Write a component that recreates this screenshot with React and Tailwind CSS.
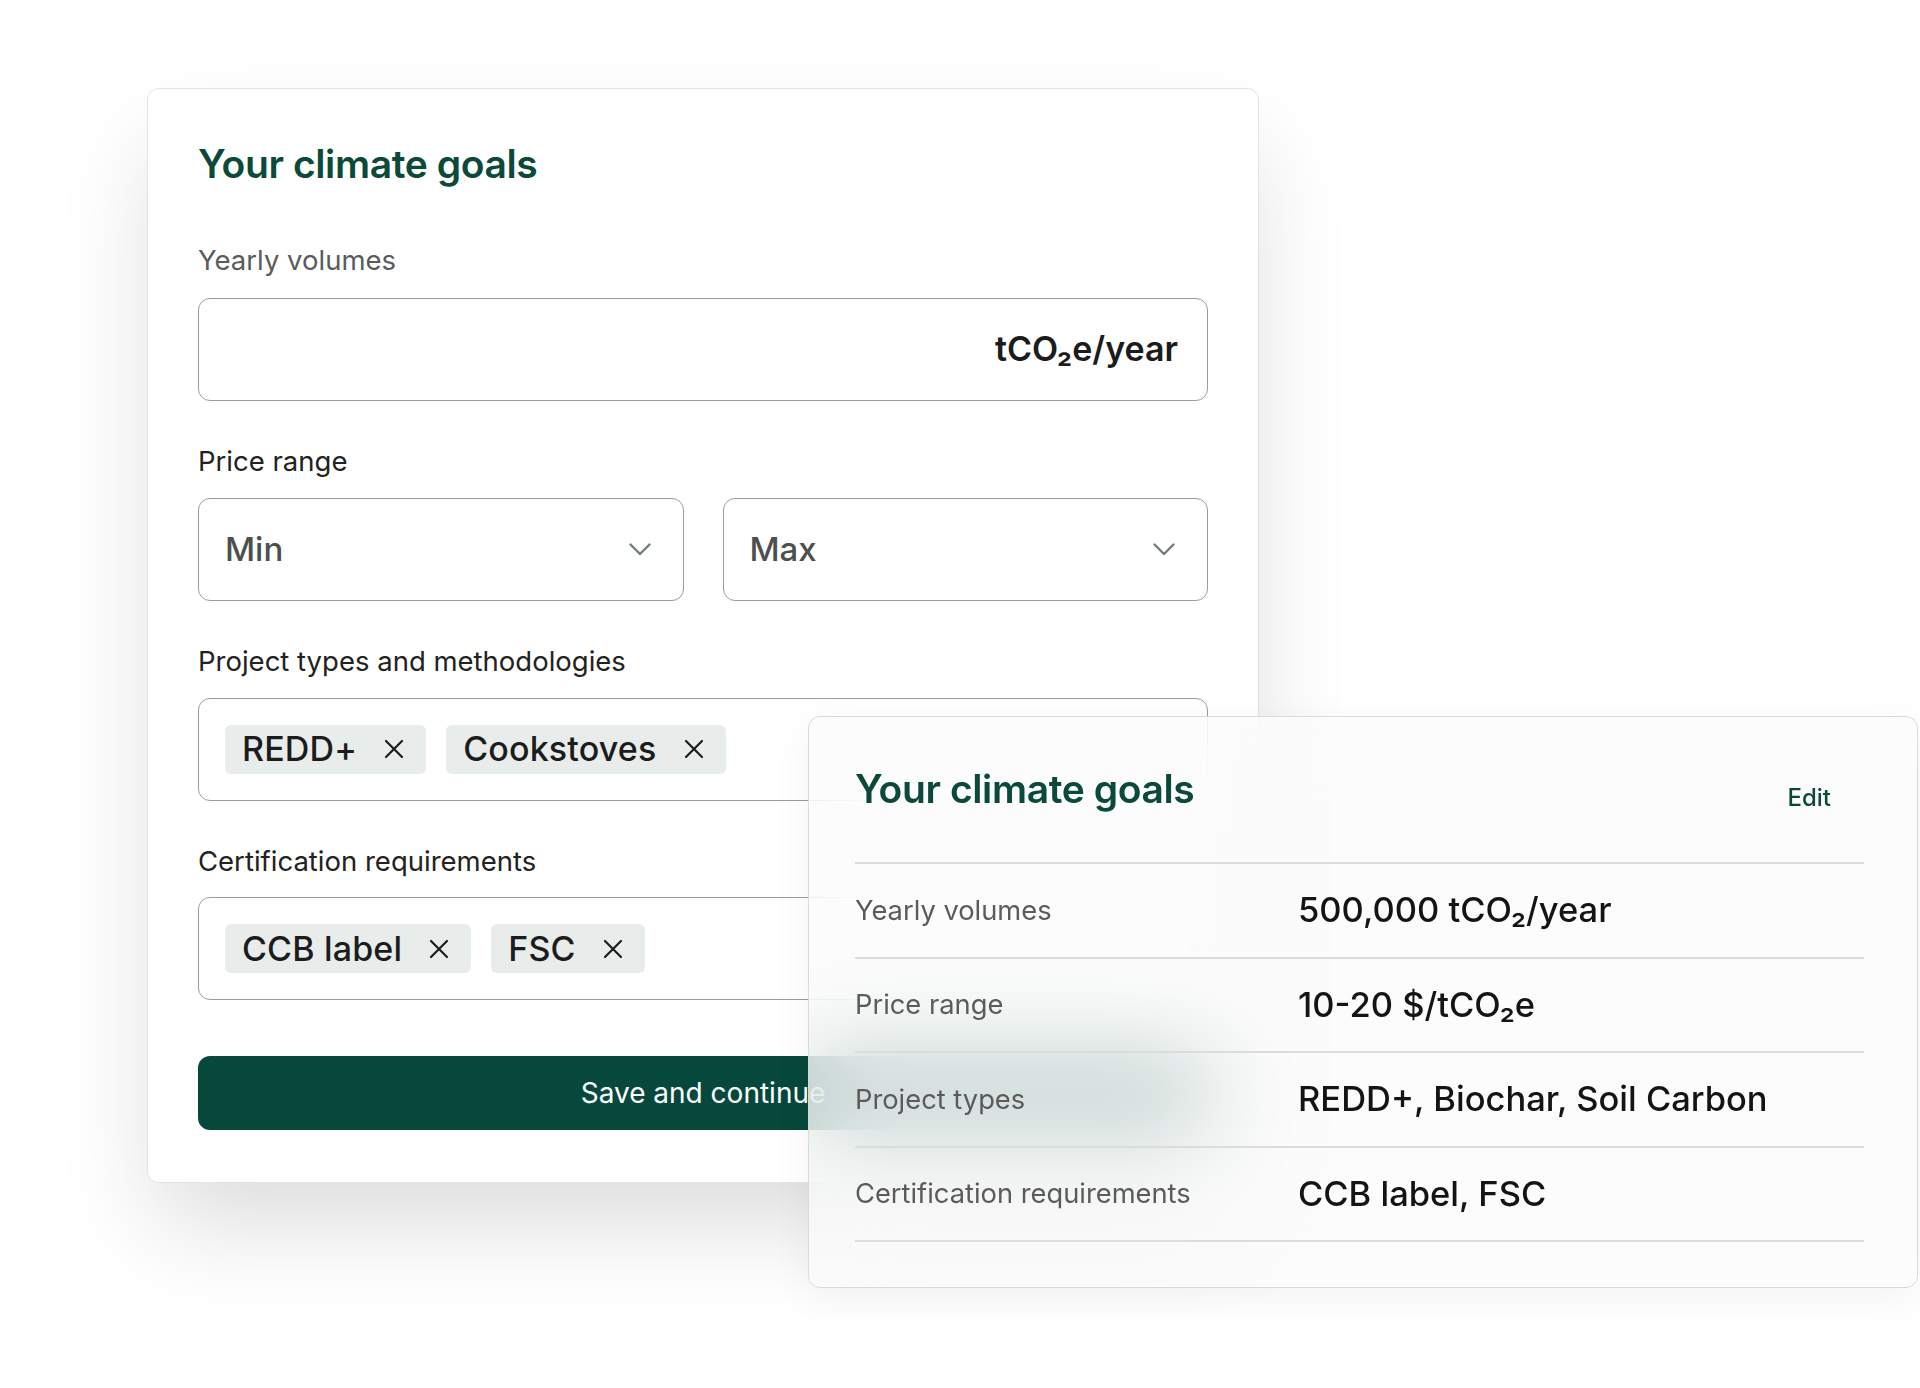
import React from "react";

const GREEN = "text-[#0b4a3b]";

function XIcon() {
  return (
    <svg width="20" height="20" viewBox="0 0 20 20" className="shrink-0">
      <path d="M2 2 L18 18 M18 2 L2 18" stroke="#1c1c1c" strokeWidth="2.2" strokeLinecap="round" fill="none" />
    </svg>
  );
}

function Chevron() {
  return (
    <svg width="22" height="13" viewBox="0 0 22 13" className="shrink-0">
      <polyline points="1.5,1.5 11,11 20.5,1.5" stroke="#6f7d78" strokeWidth="2.4" strokeLinecap="round" strokeLinejoin="round" fill="none" />
    </svg>
  );
}

function Label({ children, muted }) {
  return (
    <div className={"text-[27.5px] leading-none " + (muted ? "text-[#5b5b5b]" : "text-[#222222]")}>
      {children}
    </div>
  );
}

function Chip({ label }) {
  return (
    <div className="flex h-[49px] items-center gap-[27px] rounded-[6px] bg-[#e8eceb] pl-[17px] pr-[22px]">
      <span className="text-[34px] font-medium leading-none tracking-[0.005em] text-[#1c1c1c]">{label}</span>
      <XIcon />
    </div>
  );
}

function Select({ placeholder }) {
  return (
    <div className="flex h-[103px] items-center justify-between rounded-[12px] border-[1.5px] border-[#9c9c9c] pl-[26px] pr-[32px]">
      <span className="text-[33px] font-medium leading-none text-[#4d4f4e]">{placeholder}</span>
      <Chevron />
    </div>
  );
}

function TagBox({ tags }) {
  return (
    <div className="mt-[22px] flex h-[103px] items-center gap-[20px] rounded-[12px] border-[1.5px] border-[#9c9c9c] pl-[26px]">
      {tags.map((t) => (
        <Chip key={t} label={t} />
      ))}
    </div>
  );
}

const summary = [
  { label: "Yearly volumes", value: "500,000 tCO₂/year" },
  { label: "Price range", value: "10-20 $/tCO₂e" },
  { label: "Project types", value: "REDD+, Biochar, Soil Carbon" },
  { label: "Certification requirements", value: "CCB label, FSC" },
];

export default function App() {
  return (
    <div className="relative h-[1388px] w-[1920px] overflow-hidden bg-white font-['Inter',sans-serif]">
      <div className="pl-[147px] pt-[88px]">
        <div className="h-[1095px] w-[1112px] rounded-[12px] border-[1.5px] border-[#e3e3e3] bg-white px-[50px] pt-[55px] shadow-[0_50px_100px_-10px_rgba(0,0,0,0.14)]">
          <h2 className={"text-[39px] font-semibold leading-none tracking-[-0.01em] " + GREEN}>
            Your climate goals
          </h2>

          <div className="mt-[64px]">
            <Label muted>Yearly volumes</Label>
          </div>
          <div className="mt-[23px] flex h-[103px] items-center justify-end rounded-[12px] border-[1.5px] border-[#9c9c9c] pr-[29px]">
            <span className="text-[34px] font-semibold leading-none text-[#1c1c1c]">tCO₂e/year</span>
          </div>

          <div className="mt-[47px]">
            <Label>Price range</Label>
          </div>
          <div className="mt-[23px] grid grid-cols-2 gap-[39px]">
            <Select placeholder="Min" />
            <Select placeholder="Max" />
          </div>

          <div className="mt-[47px]">
            <Label>Project types and methodologies</Label>
          </div>
          <TagBox tags={["REDD+", "Cookstoves"]} />

          <div className="mt-[47px]">
            <Label>Certification requirements</Label>
          </div>
          <TagBox tags={["CCB label", "FSC"]} />

          <button className="mt-[56px] flex h-[74px] w-full items-center justify-center rounded-[12px] bg-[#06493c] text-[28px] leading-none text-white">
            Save and continue
          </button>
        </div>
      </div>

      <div className="absolute left-[808px] top-[716px] h-[572px] w-[1110px] rounded-[12px] border-[1.5px] border-[#dadada] bg-[rgba(251,251,251,0.74)] pl-[46px] pr-[53px] pt-[52px] shadow-[0_10px_40px_rgba(0,0,0,0.05)] backdrop-blur-[48px]">
        <div className="flex items-end justify-between">
          <h2 className={"text-[39px] font-semibold leading-none tracking-[-0.01em] " + GREEN}>
            Your climate goals
          </h2>
          <span className={"-mb-[2px] mr-[33px] text-[24px] font-medium leading-none " + GREEN}>Edit</span>
        </div>
        <div className="mt-[54px] h-[2px] bg-[#dcdcdc]" />
        {summary.map((row) => (
          <div key={row.label}>
            <div className="flex h-[92.5px] items-center">
              <div className="w-[443px] text-[27.3px] leading-none text-[#5b5b5b]">{row.label}</div>
              <div className="text-[34.5px] font-medium leading-none text-[#141414]">{row.value}</div>
            </div>
            <div className="h-[2px] bg-[#dcdcdc]" />
          </div>
        ))}
      </div>
    </div>
  );
}
